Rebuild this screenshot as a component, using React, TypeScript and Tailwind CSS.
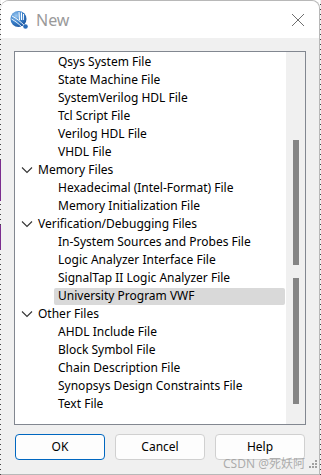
import { Fragment } from "react";

type Row = { label: string; level: 0 | 1; selected?: boolean };

const rows: Row[] = [
  { label: "Qsys System File", level: 1 },
  { label: "State Machine File", level: 1 },
  { label: "SystemVerilog HDL File", level: 1 },
  { label: "Tcl Script File", level: 1 },
  { label: "Verilog HDL File", level: 1 },
  { label: "VHDL File", level: 1 },
  { label: "Memory Files", level: 0 },
  { label: "Hexadecimal (Intel-Format) File", level: 1 },
  { label: "Memory Initialization File", level: 1 },
  { label: "Verification/Debugging Files", level: 0 },
  { label: "In-System Sources and Probes File", level: 1 },
  { label: "Logic Analyzer Interface File", level: 1 },
  { label: "SignalTap II Logic Analyzer File", level: 1 },
  { label: "University Program VWF", level: 1, selected: true },
  { label: "Other Files", level: 0 },
  { label: "AHDL Include File", level: 1 },
  { label: "Block Symbol File", level: 1 },
  { label: "Chain Description File", level: 1 },
  { label: "Synopsys Design Constraints File", level: 1 },
  { label: "Text File", level: 1 },
];

function QuartusIcon() {
  return (
    <svg width="19" height="20" viewBox="0 0 19 20">
      <defs>
        <radialGradient id="g" cx="0.35" cy="0.3" r="0.8">
          <stop offset="0" stopColor="#9cc8f0" />
          <stop offset="0.5" stopColor="#3b82cc" />
          <stop offset="1" stopColor="#174f97" />
        </radialGradient>
      </defs>
      <circle cx="8.5" cy="9" r="8" fill="url(#g)" />
      <path d="M2 6 C6 8 11 12 15 16" stroke="#fff" strokeWidth="0.9" fill="none" />
      <path d="M1.5 9 C5 11 9 14 12 17" stroke="#fff" strokeWidth="0.9" fill="none" />
      <path d="M9 2 L9.5 10 M11.5 2.5 L11.5 10 M13.5 4 L13.3 10" stroke="#fff" strokeWidth="1" fill="none" />
      <circle cx="15.5" cy="16.5" r="2.3" fill="#2a6cb8" />
    </svg>
  );
}

function Chevron() {
  return (
    <svg width="12" height="8" viewBox="0 0 12 8" className="shrink-0">
      <polyline points="1,1.5 6,6.5 11,1.5" fill="none" stroke="#333" strokeWidth="1.1" />
    </svg>
  );
}

export default function App() {
  return (
    <div className="w-[321px] h-[475px] flex bg-white font-['Segoe_UI','Noto_Sans',sans-serif] text-[12px] text-[#000] overflow-hidden">
      {/* background behind window */}
      <div className="w-[1px] h-full flex flex-col bg-[repeating-linear-gradient(to_bottom,#f0f0f0_0px,#f0f0f0_4px,#444_4px,#444_5px)]">
        <div className="h-[160px]" />
        <div className="h-[41px] bg-[#7b2d8e]" />
        <div className="h-[24px]" />
        <div className="h-[25px] bg-[#7b2d8e]" />
      </div>

      <div className="relative flex-1 flex flex-col rounded-t-[8px] border border-[#b8b8b8] border-l-0 bg-[#f0f0f0]">
        {/* title bar */}
        <div className="h-[37px] flex items-center bg-white rounded-t-[8px] pl-[9px] pr-[14px]">
          <QuartusIcon />
          <span className="ml-[7px] text-[16px] text-[#9a9a9a]">New</span>
          <svg width="14" height="14" viewBox="0 0 14 14" className="ml-auto">
            <path d="M1 1 L13 13 M13 1 L1 13" stroke="#6f6f6f" strokeWidth="1" />
          </svg>
        </div>

        {/* body */}
        <div className="flex-1 flex flex-col pt-[13px] pl-[13px] pr-[13px]">
          <div className="h-[374px] flex border border-[#828790] bg-white">
            <div className="flex-1 flex flex-col pt-[1px]">
              {rows.map((r) => (
                <Fragment key={r.label}>
                  {r.level === 0 ? (
                    <div className="h-[18px] flex items-center pl-[6px] gap-[5px] whitespace-nowrap">
                      <Chevron />
                      <span>{r.label}</span>
                    </div>
                  ) : (
                    <div className="h-[18px] flex items-center pl-[39px] pr-[1px]">
                      <span
                        className={
                          r.selected
                            ? "flex-1 h-[17px] flex items-center pl-[4px] bg-[#d9d9d9] rounded-[2px] whitespace-nowrap"
                            : "pl-[4px] whitespace-nowrap"
                        }
                      >
                        {r.label}
                      </span>
                    </div>
                  )}
                </Fragment>
              ))}
            </div>
            <div className="w-[19px] bg-[#f0f0f0] flex flex-col pt-[88px] pl-[7px] gap-[13px]">
              <div className="w-[6px] h-[125px] bg-[#858585]" />
              <div className="w-[6px] h-[126px] bg-[#858585]" />
            </div>
          </div>

          <div className="mt-[9px] flex gap-[10px] pl-[1px]">
            <button className="w-[90px] h-[26px] rounded-[4px] border-[1.5px] border-[#0067c0] bg-[#fdfdfd]">OK</button>
            <button className="w-[90px] h-[26px] rounded-[4px] border border-[#d0d0d0] bg-[#fdfdfd]">Cancel</button>
            <button className="w-[90px] h-[26px] rounded-[4px] border border-[#d0d0d0] bg-[#fdfdfd]">Help</button>
          </div>
        </div>

        {/* watermark */}
        <span className="absolute right-[14px] bottom-[2px] text-[12px] leading-[16px] text-[#9a9a9a]/80 font-['Noto_Sans','Noto_Sans_CJK_SC',sans-serif]">
          CSDN @死妖阿
        </span>
        {/* resize grip */}
        <div className="absolute right-[2px] bottom-[6px] grid grid-cols-3 gap-[1px]">
          <span className="w-[2px] h-[2px]" />
          <span className="w-[2px] h-[2px]" />
          <span className="w-[2px] h-[2px] bg-[#a0a0a0]" />
          <span className="w-[2px] h-[2px]" />
          <span className="w-[2px] h-[2px] bg-[#a0a0a0]" />
          <span className="w-[2px] h-[2px] bg-[#a0a0a0]" />
          <span className="w-[2px] h-[2px] bg-[#a0a0a0]" />
          <span className="w-[2px] h-[2px] bg-[#a0a0a0]" />
          <span className="w-[2px] h-[2px] bg-[#a0a0a0]" />
        </div>
      </div>

      <div className="w-[1px] h-full bg-[repeating-linear-gradient(to_bottom,#f0f0f0_0px,#f0f0f0_4px,#444_4px,#444_5px)]" />
    </div>
  );
}
